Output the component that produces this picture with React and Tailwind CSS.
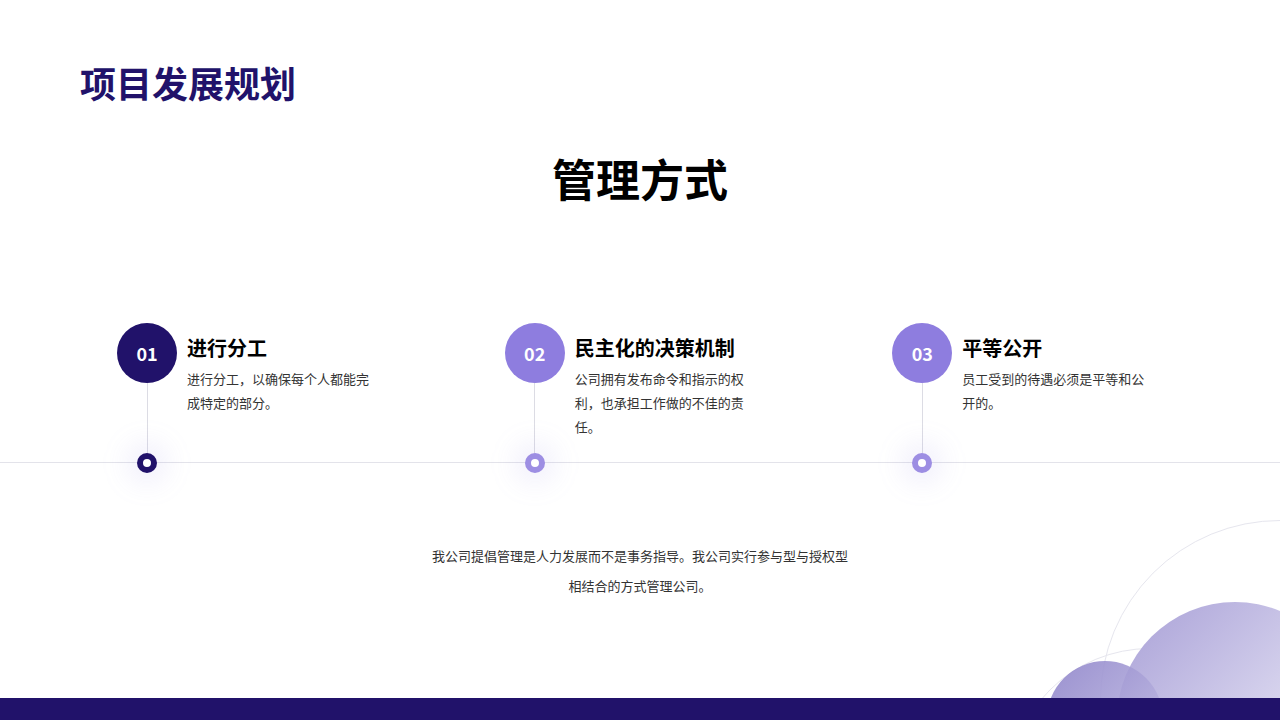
import React from "react";

const items = [
  { n: "01", title: "进行分工", text: "进行分工，以确保每个人都能完成特定的部分。", dark: true },
  { n: "02", title: "民主化的决策机制", text: "公司拥有发布命令和指示的权利，也承担工作做的不佳的责任。" },
  { n: "03", title: "平等公开", text: "员工受到的待遇必须是平等和公开的。" },
];

const Step = ({ item }) => (
  <div className="w-[401px] flex gap-[10px]">
    <div className="flex flex-col items-center w-[60px]">
      <div className={`w-[60px] h-[60px] rounded-full flex items-center justify-center text-white font-bold text-[18px] ${item.dark ? "bg-[#21126a]" : "bg-[#8e7ddf]"}`}>
        {item.n}
      </div>
      <div className="w-px h-[70px] bg-[#dcdce4]" />
      <div className="relative">
        <div className="absolute -inset-3 rounded-full bg-[#8e7ddf]/10 blur-md" />
        <div className={`relative w-[20px] h-[20px] rounded-full border-[6px] bg-white ${item.dark ? "border-[#21126a]" : "border-[#9d8ee3]"}`} />
      </div>
    </div>
    <div className="w-[185px] pt-[10px]">
      <div className="text-[20px] font-bold text-black leading-[30px]">{item.title}</div>
      <div className="text-[13px] text-[#333] leading-[24px] mt-[4px]">{item.text}</div>
    </div>
  </div>
);

export default function App() {
  return (
    <div className="relative w-[1280px] h-[720px] overflow-hidden bg-white" style={{ fontFamily: '"Noto Sans CJK SC", "Noto Sans", sans-serif' }}>
      <div className="absolute right-[-180px] top-[520px] w-[360px] h-[360px] rounded-full border border-[#e6e6ee]" style={{ right: "-180px" }} />
      <div className="absolute left-[1008px] top-[648px] w-[284px] h-[284px] rounded-full border border-[#e6e6ee]" />
      <div className="absolute left-[1117px] top-[602px] w-[236px] h-[236px] rounded-full bg-gradient-to-br from-[#a89fd6] to-[#ffffff]" />
      <div className="absolute left-[1047px] top-[661px] w-[116px] h-[116px] rounded-full bg-gradient-to-br from-[#8e83c9] to-[#c9c4e6] opacity-90" />

      <div className="relative flex flex-col h-full">
        <div className="pl-[80px] pt-[58px] text-[36px] font-bold text-[#21126a] leading-[48px]">项目发展规划</div>
        <div className="mt-[42px] text-center text-[44px] font-bold text-black leading-[60px]">管理方式</div>
        <div className="relative mt-[115px]">
          <div className="absolute left-0 right-0 top-[139px] h-px bg-[#e3e3ea]" />
          <div className="relative flex pl-[117px]">
            {items.map((it) => <Step key={it.n} item={it} />)}
          </div>
        </div>
        <div className="mt-[68px] mx-auto w-[420px] text-center text-[13px] text-[#333] leading-[30px]">
          我公司提倡管理是人力发展而不是事务指导。我公司实行参与型与授权型相结合的方式管理公司。
        </div>
        <div className="mt-auto h-[22px] bg-[#21126a]" />
      </div>
    </div>
  );
}
